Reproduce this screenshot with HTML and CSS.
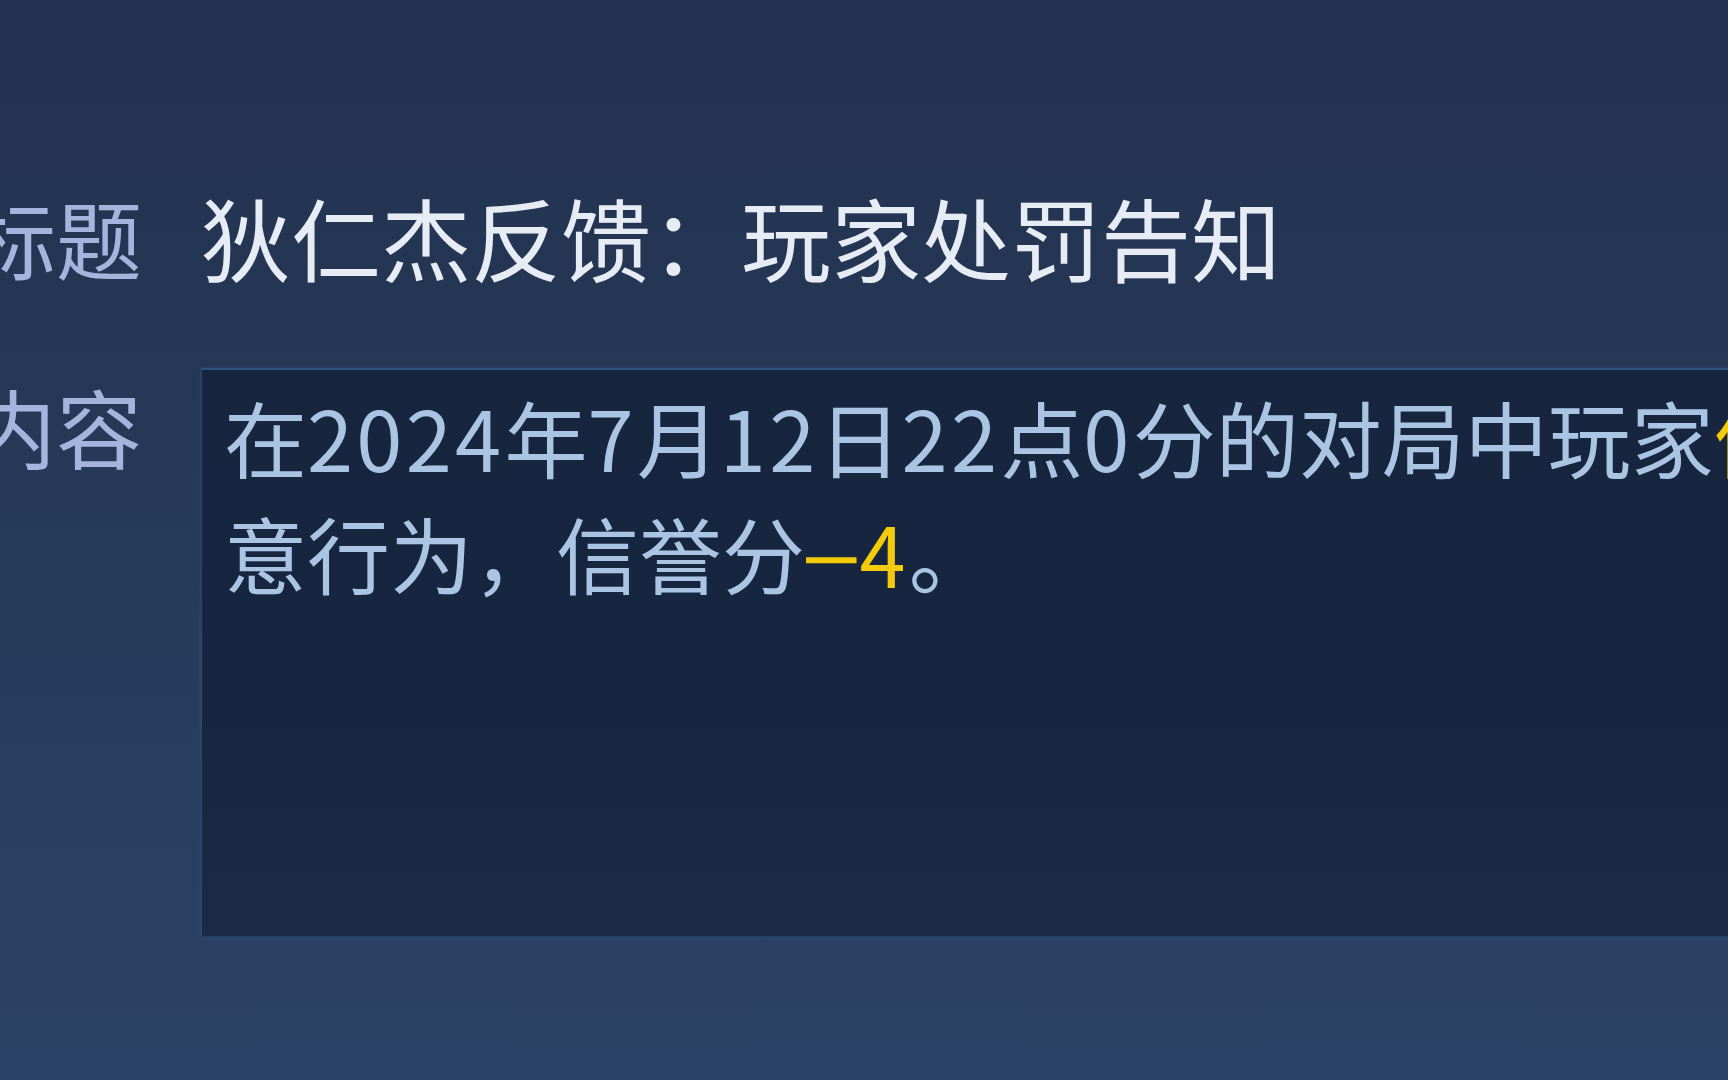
FILE: index.html
```html
<!DOCTYPE html>
<html lang="zh-CN">
<head>
<meta charset="utf-8">
<title>玩家处罚告知</title>
<link rel="stylesheet" href="styles.css">
</head>
<body>
<main class="mail">
  <div class="row row-title">
    <div class="label">标题</div>
    <div class="title">狄仁杰反馈：玩家处罚告知</div>
  </div>
  <div class="row row-content">
    <div class="label label-content">内容</div>
    <div class="content-box">
      <p class="content">在<span class="num">2024</span>年<span class="num">7</span>月<span class="num">12</span>日<span class="num">22</span>点<span class="num">0</span>分的对局中玩家<span class="hl">仙人掌存在恶</span><br>意行为，信誉分<span class="hl score"><span class="minus">−</span><span class="num">4</span></span>。</p>
    </div>
  </div>
</main>
</body>
</html>
```
FILE: styles.css
```css
html, body {
  margin: 0;
  padding: 0;
  width: 1728px;
  height: 1080px;
  overflow: hidden;
}

body {
  background: linear-gradient(180deg, #233250 0%, #263a59 50%, #2b4366 100%);
  font-family: "Noto Sans CJK SC", "Noto Sans", sans-serif;
  font-weight: 400;
}

.mail {
  padding-top: 178px;
  display: flex;
  flex-direction: column;
  gap: 73px;
}

.row {
  display: grid;
  grid-template-columns: 142px 1fr;
  column-gap: 59px;
}

.row-title {
  align-items: center;
}

.row-content {
  align-items: start;
}

.label {
  display: flex;
  justify-content: flex-end;
  white-space: nowrap;
  font-size: 86px;
  line-height: 117px;
  color: #a4b4dc;
}

.label-content {
  line-height: 116px;
}

.title {
  font-size: 90px;
  line-height: 117px;
  color: #e7ecf4;
  white-space: nowrap;
}

.content-box {
  width: 1700px;
  height: 566px;
  background: linear-gradient(180deg, #17253f 0%, #172640 60%, #1a2a47 100%);
  border-top: 2px solid #2e5380;
  border-left: 1px solid #2a4770;
  border-bottom: 2px solid #263f63;
  box-shadow: 0 0 3px rgba(60, 110, 170, 0.35);
}

.content {
  margin: 0;
  padding: 8px 0 0 22px;
  font-size: 83px;
  line-height: 116px;
  color: #aac5e4;
  white-space: nowrap;
}

.num {
  letter-spacing: 3.3px;
}

.hl {
  color: #f4cb0a;
}

.minus {
  display: inline-block;
  font-family: "Liberation Sans", sans-serif;
  font-size: 83px;
  transform: scaleX(1.25);
  margin: 0 4px 0 2px;
}
```
